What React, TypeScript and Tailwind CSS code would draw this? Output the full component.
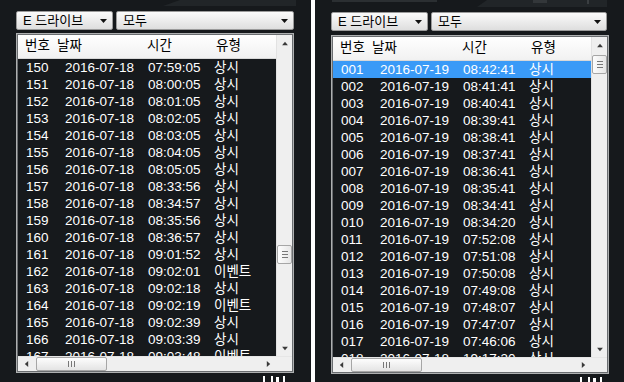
import React from "react";

type Row = [string, string, string, string];

const leftRows: Row[] = [
  ["150", "2016-07-18", "07:59:05", "상시"],
  ["151", "2016-07-18", "08:00:05", "상시"],
  ["152", "2016-07-18", "08:01:05", "상시"],
  ["153", "2016-07-18", "08:02:05", "상시"],
  ["154", "2016-07-18", "08:03:05", "상시"],
  ["155", "2016-07-18", "08:04:05", "상시"],
  ["156", "2016-07-18", "08:05:05", "상시"],
  ["157", "2016-07-18", "08:33:56", "상시"],
  ["158", "2016-07-18", "08:34:57", "상시"],
  ["159", "2016-07-18", "08:35:56", "상시"],
  ["160", "2016-07-18", "08:36:57", "상시"],
  ["161", "2016-07-18", "09:01:52", "상시"],
  ["162", "2016-07-18", "09:02:01", "이벤트"],
  ["163", "2016-07-18", "09:02:18", "상시"],
  ["164", "2016-07-18", "09:02:19", "이벤트"],
  ["165", "2016-07-18", "09:02:39", "상시"],
  ["166", "2016-07-18", "09:03:39", "상시"],
  ["167", "2016-07-18", "09:03:48", "이벤트"],
];

const rightRows: Row[] = [
  ["001", "2016-07-19", "08:42:41", "상시"],
  ["002", "2016-07-19", "08:41:41", "상시"],
  ["003", "2016-07-19", "08:40:41", "상시"],
  ["004", "2016-07-19", "08:39:41", "상시"],
  ["005", "2016-07-19", "08:38:41", "상시"],
  ["006", "2016-07-19", "08:37:41", "상시"],
  ["007", "2016-07-19", "08:36:41", "상시"],
  ["008", "2016-07-19", "08:35:41", "상시"],
  ["009", "2016-07-19", "08:34:41", "상시"],
  ["010", "2016-07-19", "08:34:20", "상시"],
  ["011", "2016-07-19", "07:52:08", "상시"],
  ["012", "2016-07-19", "07:51:08", "상시"],
  ["013", "2016-07-19", "07:50:08", "상시"],
  ["014", "2016-07-19", "07:49:08", "상시"],
  ["015", "2016-07-19", "07:48:07", "상시"],
  ["016", "2016-07-19", "07:47:07", "상시"],
  ["017", "2016-07-19", "07:46:06", "상시"],
  ["018", "2016-07-18", "19:17:30", "상시"],
];

const font = "font-['Liberation_Sans','Noto_Sans_CJK_KR',sans-serif]";

function Tri({ dir, size = 7, color = "#3a3a3a" }: { dir: "up" | "down" | "left" | "right"; size?: number; color?: string }) {
  const pts = {
    up: "0,5 7,5 3.5,1",
    down: "0,1 7,1 3.5,5",
    left: "5,0 5,7 1,3.5",
    right: "1,0 1,7 5,3.5",
  }[dir];
  const vb = dir === "up" || dir === "down" ? "0 0 7 6" : "0 0 6 7";
  const w = dir === "up" || dir === "down" ? size : size - 1;
  const h = dir === "up" || dir === "down" ? size - 1 : size;
  return (
    <svg width={w} height={h} viewBox={vb}>
      <polygon points={pts} fill={color} />
    </svg>
  );
}

function Dropdown({ label, wide }: { label: string; wide?: boolean }) {
  return (
    <div
      className={`flex h-[19px] items-center justify-between rounded-[2px] border border-[#9b9b9b] bg-linear-to-b from-[#fbfbfb] to-[#dedede] pl-[6px] pr-[5px] text-[13px] leading-none text-black ${
        wide ? "flex-1" : "w-[97px]"
      }`}
    >
      <span>{label}</span>
      <Tri dir="down" color="#111" />
    </div>
  );
}

function Panel({
  rows,
  selected,
  right,
}: {
  rows: Row[];
  selected?: number;
  right?: boolean;
}) {
  return (
    <div className={`flex h-full flex-col bg-[#16191c] ${right ? "w-[309px]" : "w-[311px]"}`}>
      <div className={right ? "h-[12px]" : "h-[11px]"}>
        {right ? (
          <svg width="309" height="12">
            <rect x="17" y="0" width="105" height="2" fill="#2b2f32" />
            <polygon points="172,0 292,0 292,7 162,7" fill="#212528" />
            <rect x="218" y="0" width="14" height="3" fill="#33373a" />
            <rect x="272" y="0" width="2" height="4" fill="#3a3e41" />
          </svg>
        ) : (
          <svg width="311" height="11">
            <polygon points="180,0 296,0 296,6 163,6" fill="#212528" />
          </svg>
        )}
      </div>
      <div className="flex gap-[3px] pl-[16px] pr-[17px]">
        <Dropdown label="E 드라이브" />
        <Dropdown label="모두" wide />
      </div>
      <div
        className={`ml-[16px] w-[278px] border border-[#aeb0b1] ${
          right ? "mt-[4px] h-[339px]" : "mt-[3px] h-[340px]"
        }`}
      >
        <div className="flex h-full flex-col border border-[#6a6d70]">
          <div className="flex min-h-0 flex-1">
            <div className="flex min-w-0 flex-1 flex-col overflow-hidden">
              <div className="flex h-[24px] shrink-0 items-center border-b border-[#d8d8d8] bg-linear-to-b from-[#ffffff] to-[#f1f1f1] text-[13.5px] text-black">
                <span className="ml-[7px] w-[32px]">번호</span>
                <span className="w-[90px]">날짜</span>
                <span className="w-[69px]">시간</span>
                <span>유형</span>
              </div>
              {rows.map((r, i) => (
                <div
                  key={r[0]}
                  className={`flex h-[17px] shrink-0 items-center text-[13.5px] leading-[17px] text-white ${
                    i === selected ? "bg-[#3a9af7]" : ""
                  }`}
                >
                  <span className="ml-[8px] w-[39px]">{r[0]}</span>
                  <span className="w-[83px]">{r[1]}</span>
                  <span className="w-[66px]">{r[2]}</span>
                  <span>{r[3]}</span>
                </div>
              ))}
            </div>
            <div className="flex w-[16px] flex-col border-l border-[#e2e2e2] bg-[#efefef]">
              <div className="flex h-[16px] items-center justify-center">
                <Tri dir="up" size={6} />
              </div>
              <div
                className={`mx-auto flex h-[19px] w-[15px] flex-col items-center justify-center gap-[2px] rounded-[2px] border border-[#a6a6a6] bg-linear-to-r from-[#fdfdfd] to-[#e6e6e6] ${
                  right ? "mt-[2px]" : "mt-[194px]"
                }`}
              >
                <div className="h-px w-[6px] bg-[#777]" />
                <div className="h-px w-[6px] bg-[#777]" />
                <div className="h-px w-[6px] bg-[#777]" />
              </div>
              <div className="flex-1" />
              <div className="flex h-[16px] items-center justify-center">
                <Tri dir="down" size={6} />
              </div>
            </div>
          </div>
          <div className="flex h-[15px] shrink-0 border-t border-[#e6e6e6] bg-[#efefef]">
            <div className="flex w-[16px] items-center justify-center">
              <Tri dir="left" size={6} />
            </div>
            <div className="ml-[2px] flex h-[14px] w-[71px] items-center justify-center gap-[2px] rounded-[2px] border border-[#a6a6a6] bg-linear-to-b from-[#fdfdfd] to-[#e4e4e4]">
              <div className="h-[6px] w-px bg-[#777]" />
              <div className="h-[6px] w-px bg-[#777]" />
              <div className="h-[6px] w-px bg-[#777]" />
            </div>
            <div className="flex-1" />
            <div className="flex w-[16px] items-center justify-center">
              <Tri dir="right" size={6} />
            </div>
            <div className="w-[16px] bg-[#efefef]" />
          </div>
        </div>
      </div>
      <div className="flex flex-1 justify-end">
        <svg width="40" height="9" className={right ? "mr-[14px]" : "mr-[18px]"}>
          <rect x="10" y="3" width="2" height="6" fill="#fff" />
          <rect x="18" y="3" width="2" height="6" fill="#fff" />
          <rect x="23" y="4" width="3" height="5" fill="#fff" />
          <rect x="30" y="3" width="2" height="6" fill="#fff" />
        </svg>
      </div>
    </div>
  );
}

export default function App() {
  return (
    <div className={`flex h-[382px] w-[624px] overflow-hidden bg-white ${font}`}>
      <Panel rows={leftRows} />
      <div className="w-[4px] bg-white" />
      <Panel rows={rightRows} selected={0} right />
    </div>
  );
}
